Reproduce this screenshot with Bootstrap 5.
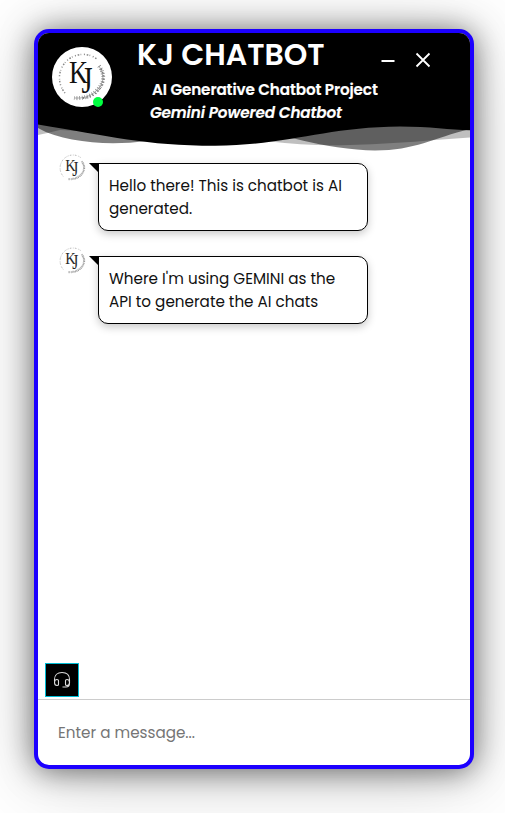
<!DOCTYPE html>
<html lang="en">
<head>
<meta charset="utf-8">
<meta name="viewport" content="width=device-width, initial-scale=1">
<title>KJ Chatbot</title>
<link href="https://cdn.jsdelivr.net/npm/bootstrap@5.3.0/dist/css/bootstrap.min.css" rel="stylesheet">
<style>
body{font-family:Poppins,Inter,sans-serif;height:813px;padding:29px 31px 0 34px;overflow:hidden;color:#000}
.chat-window{width:440px;height:740px;border:4px solid #1c00ff;border-radius:15px;overflow:hidden;box-shadow:0 2px 30px rgba(0,0,0,.55),0 8px 80px rgba(0,0,0,.2)}
.chat-head{height:87px;padding:0 38px 0 14px;background:#000}
.waves{display:block;height:36px;width:432px;margin-bottom:-3px}
.avatar{width:60px;height:60px;margin-top:14px}
.online{width:10px;height:10px;background:#00ff40;right:9px;bottom:0}
.head-text{width:242px;margin-left:25px;color:#fff;white-space:nowrap}
.title-line{font-size:30px;font-weight:600;line-height:42px;margin:1px 0 0}
.sub-line{font-size:15.2px;letter-spacing:-.11px;-webkit-text-stroke:.2px #fff;font-weight:600;line-height:23px;padding-left:15px;margin-top:2px}
.tag-line{font-size:15.2px;letter-spacing:-.11px;-webkit-text-stroke:.2px #fff;font-weight:600;font-style:italic;line-height:23px;padding-left:13px;height:21px}
.head-tools{margin:19px -2px 0 1px}
.msg-area{padding:0 0 0 20px}
.msg-row{height:93px}
.mini{width:33px;height:33px;margin:-2px -2px 0;opacity:.9}
.tail{width:10px;height:10px;margin:10px -1px 0 2px;background:#000;clip-path:polygon(0 0,100% 0,100% 100%)}
.bubble{width:270px;height:68px;margin-top:10px;padding:10px;border:1px solid #000;border-radius:0 10px 10px 10px;font-size:15.2px;line-height:23px;color:#111;box-shadow:0 3px 8px rgba(0,0,0,.22);white-space:nowrap}
.help-btn{width:34px;height:34px;margin:0 0 2px 7px;border:1px solid #00bcd4;background:#000}
.entry{height:66px;border-top:1px solid #ccc;padding:1px 20px 0}
.entry input{font-size:15.2px;outline:0}
.entry input::placeholder{color:#757575;opacity:1}
</style>
</head>
<body class="bg-white">
<svg width="0" height="0" class="position-absolute"><defs><symbol id="logo" viewBox="0 0 60 60">
<circle cx="30" cy="30" r="30" fill="#fff"/>
<path d="M13 46A23.5 23.5 0 0 1 45 12" fill="none" stroke="#888" stroke-width="1.5" stroke-dasharray="1 1.8 1.6 1.3 .7 2.6"/>
<path d="M47 19q10 14-4 26q-8 7-21 6" fill="none" stroke="#777" stroke-width=".6"/>
<path d="M47 19q10 14-4 26q-8 7-21 6" fill="none" stroke="#888" stroke-width="4" stroke-dasharray=".8 1.9"/>
<path d="M49 22q7 13-6 25q-6 4-12 4" fill="none" stroke="#777" stroke-width="2" stroke-dasharray="1 2.3"/>
<text x="17" y="36" font-family="Liberation Serif,serif" font-size="31" textLength="19" lengthAdjust="spacingAndGlyphs" fill="#111">K</text>
<text transform="translate(29.5 46) scale(.75 1)" font-family="Liberation Serif,serif" font-size="38" fill="#111">J</text>
</symbol></defs></svg>
<main class="chat-window bg-white d-flex flex-column">
<header>
<div class="chat-head d-flex align-items-start">
<div class="avatar position-relative flex-shrink-0"><svg class="d-block" width="60" height="60"><use href="#logo"/></svg><span class="online position-absolute rounded-circle"></span></div>
<div class="head-text position-relative z-1"><h1 class="title-line">KJ CHATBOT</h1><div class="sub-line">AI Generative Chatbot Project</div><div class="tag-line">Gemini Powered Chatbot</div></div>
<svg class="head-tools flex-shrink-0" width="51" height="16" fill="none" stroke="#fff" stroke-width="1.8"><path d="M1.500 9H14.500M36.500 1.5l13 13M49.500 1.5L36.500 14.5"/></svg>
</div>
<svg class="waves" viewBox="38 120 432 36">
<path d="M38 119V135Q48 133 60 130L270 141.5Q305 146 350 145Q395 143.500 435 140L470 137.500V119z" opacity=".25"/>
<path d="M38 119V128C48 134 60 137 72 139.500Q107 146 147 141L215 130L294 138.500Q340 150 375 150.500C415 150.500 433 138 470 129V119z" opacity=".5"/>
<path d="M38 119V124.500C110 136 145 145.700 215 145.800C290 145 325 127 400 126.500C430 126.500 450 130 470 130.300V119z"/>
</svg>
</header>
<section class="msg-area flex-grow-1">
<div class="msg-row d-flex align-items-start"><svg class="mini flex-shrink-0"><use href="#logo"/></svg><span class="tail"></span><div class="bubble bg-white">Hello there! This is chatbot is AI<br>generated.</div></div>
<div class="msg-row d-flex align-items-start"><svg class="mini flex-shrink-0"><use href="#logo"/></svg><span class="tail"></span><div class="bubble bg-white">Where I'm using GEMINI as the<br>API to generate the AI chats</div></div>
</section>
<div class="help-btn d-flex align-items-center justify-content-center"><svg width="18" height="18" fill="none" stroke="#ddd" stroke-width="1.1"><path d="M1.500 10V8.500C1.500 4 4.500 1.500 9 1.500S16.500 4 16.500 8.500V12.500Q16.500 16 13 16H9.500M4 8.500q-2.500 0-2.500 3t2.500 3q1.500 0 1.500-1v-4q0-1-1.500-1zM14 8.500q2.500 0 2.500 3t-2.500 3q-1.500 0-1.500-1v-4q0-1 1.500-1z"/></svg></div>
<div class="entry d-flex"><input class="border-0 w-100 p-0 bg-transparent" aria-label="Message" placeholder="Enter a message..."></div>
</main>
<script src="https://cdn.jsdelivr.net/npm/bootstrap@5.3.0/dist/js/bootstrap.bundle.min.js"></script>
</body>
</html>
